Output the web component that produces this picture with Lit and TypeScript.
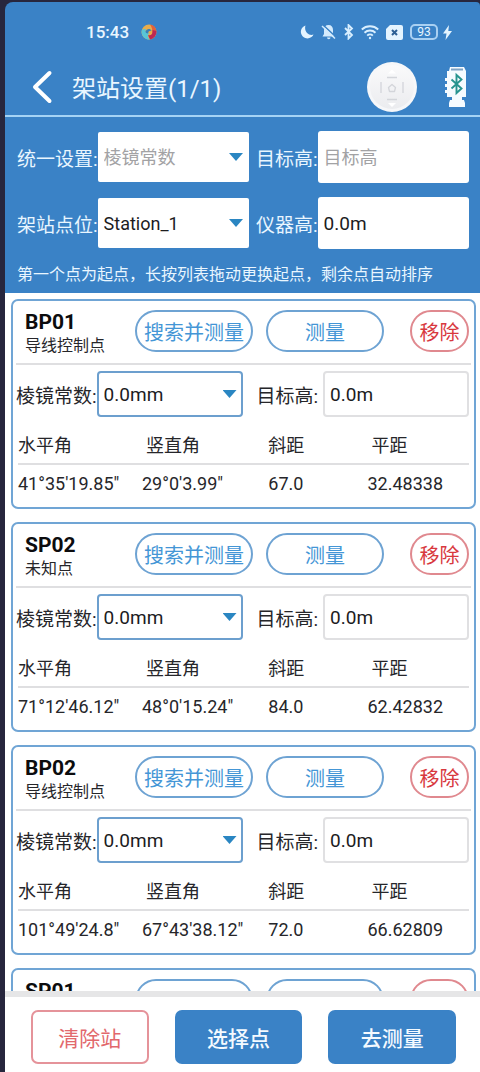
import { LitElement, html, css, svg } from "lit";
import { customElement, property } from "lit/decorators.js";

interface Point {
  name: string;
  kind: string;
  values: string[];
}

const COLUMNS = ["水平角", "竖直角", "斜距", "平距"];

const POINTS: Point[] = [
  { name: "BP01", kind: "导线控制点", values: ["41°35'19.85\"", "29°0'3.99\"", "67.0", "32.48338"] },
  { name: "SP02", kind: "未知点", values: ["71°12'46.12\"", "48°0'15.24\"", "84.0", "62.42832"] },
  { name: "BP02", kind: "导线控制点", values: ["101°49'24.8\"", "67°43'38.12\"", "72.0", "66.62809"] },
  { name: "SP01", kind: "未知点", values: ["", "", "", ""] },
];

const controls = css`
  * {
    box-sizing: border-box;
  }
  button,
  input,
  select {
    font: inherit;
    margin: 0;
    min-width: 0;
  }
  button {
    padding: 0;
    cursor: pointer;
  }
  .picker {
    display: grid;
    align-items: center;
    min-width: 0;
  }
  .picker select,
  .picker .arrow {
    grid-area: 1 / 1;
  }
  .picker select {
    appearance: none;
    width: 100%;
    padding: 0 24px 0 6px;
    background: #fff;
    color: #1c1c1e;
    border-radius: 2px;
  }
  .arrow {
    justify-self: end;
    width: 14px;
    height: 8px;
    margin-right: 6px;
    background: #2a86c2;
    clip-path: polygon(0 0, 100% 0, 50% 100%);
    pointer-events: none;
  }
`;

@customElement("point-card")
export class PointCard extends LitElement {
  @property({ attribute: false }) point!: Point;

  static styles = [
    controls,
    css`
      :host {
        display: block;
        flex: none;
        border: 2px solid #70a5d5;
        border-radius: 7px;
        padding: 0 5px;
        background: #fff;
        color: #26262a;
      }
      .head {
        display: flex;
        align-items: flex-start;
        padding: 9px 2px 5px;
        margin: 0 -2px;
        border-bottom: 2px solid #dfdfe1;
      }
      .title {
        flex: 1;
        padding-left: 7px;
        line-height: 24px;
      }
      .name {
        margin: 0;
        font-size: 21px;
        font-weight: 700;
        color: #0c0c0e;
      }
      .kind {
        margin: 0;
        font-size: 16px;
      }
      .pill {
        height: 42px;
        width: 118px;
        margin-left: 13px;
        border: 2px solid #6ea3d3;
        border-radius: 21px;
        background: #fff;
        color: #4496d6;
        font-size: 20px;
      }
      .remove {
        width: 59px;
        margin-left: 26px;
        border-color: #e0898f;
        color: #d8383e;
      }
      .fields {
        display: grid;
        grid-template-columns: auto 1fr auto 1fr;
        align-items: center;
        margin-left: -2px;
        padding-top: 6px;
        font-size: 19px;
      }
      .fields select,
      .fields input {
        height: 46px;
      }
      .fields select {
        padding-left: 5px;
        border: 2px solid #6c9fce;
        border-radius: 4px;
      }
      .second {
        padding: 0 5px 0 14px;
      }
      .fields input {
        width: 100%;
        padding: 0 5px;
        border: 2px solid #e0e0e2;
        border-radius: 4px;
        background: #fff;
        color: #1c1c1e;
      }
      table {
        width: 100%;
        table-layout: fixed;
        border-collapse: separate;
        border-spacing: 0;
        font-size: 18px;
        line-height: 22px;
      }
      th {
        padding: 18px 0 6px;
        font-weight: 400;
        text-align: left;
        border-bottom: 2px solid #dfdfe1;
      }
      td {
        padding: 8px 0 12px;
        height: 42px;
        white-space: nowrap;
      }
      .c0 {
        width: 124px;
      }
      .c1 {
        width: 28%;
      }
      .c2 {
        width: 22%;
      }
      th.c1,
      th.c3 {
        padding-left: 4px;
      }
    `,
  ];

  render() {
    const p = this.point;
    return html`
      <div class="head">
        <div class="title">
          <h2 class="name">${p.name}</h2>
          <p class="kind">${p.kind}</p>
        </div>
        <button class="pill">搜索并测量</button>
        <button class="pill">测量</button>
        <button class="pill remove">移除</button>
      </div>
      <div class="fields">
        <label for="prism">棱镜常数:</label>
        <div class="picker">
          <select id="prism"><option>0.0mm</option></select>
          <span class="arrow"></span>
        </div>
        <label class="second" for="target">目标高:</label>
        <input id="target" type="text" .value=${"0.0m"} />
      </div>
      <table>
        <thead>
          <tr>${COLUMNS.map((c, i) => html`<th class="c${i}" scope="col">${c}</th>`)}</tr>
        </thead>
        <tbody>
          <tr>${p.values.map((v) => html`<td>${v}</td>`)}</tr>
        </tbody>
      </table>
    `;
  }
}

const bluetooth = svg`<path d="M2 4 L9 11 L5.500 14.500 V1 L9 4.500 L2 11" />`;

@customElement("app-root")
export class AppRoot extends LitElement {
  static styles = [
    controls,
    css`
      :host {
        display: flex;
        flex-direction: column;
        height: 100vh;
        box-sizing: border-box;
        padding: 2px 0 0 5px;
        background: #27263d;
        font-family: Roboto, "Noto Sans CJK SC", sans-serif;
      }
      header {
        flex: none;
        background: #3a82c6;
        color: #e9f6ff;
        border-radius: 8px 4px 0 0;
      }
      .status {
        display: flex;
        align-items: center;
        height: 60px;
        padding: 0 28px 0 81px;
        font-size: 17px;
        font-weight: 500;
      }
      .status svg {
        display: block;
      }
      .swirl {
        margin-left: 12px;
      }
      .tray {
        display: flex;
        align-items: center;
        margin-left: auto;
        gap: 7px;
      }
      .battery {
        width: 28px;
        height: 16px;
        border: 2px solid #a9d0f2;
        border-radius: 5px;
        font-size: 12px;
        line-height: 12px;
        font-weight: 400;
        text-align: center;
      }
      .power {
        display: flex;
        align-items: center;
        gap: 5px;
      }
      .nav {
        display: flex;
        align-items: center;
        height: 55px;
        padding: 0 13px 4px 27px;
        border-bottom: 2px solid #a5d3f5;
      }
      .nav h1 {
        flex: 1;
        margin: 0 0 0 19px;
        font-size: 24px;
        font-weight: 400;
      }
      .icon {
        display: block;
        border: 0;
        background: none;
      }
      .icon svg {
        display: block;
      }
      .device {
        margin-left: 28px;
      }
      .setup {
        display: grid;
        grid-template-columns: auto 1fr auto 1fr;
        align-items: center;
        row-gap: 14px;
        padding: 14px 11px 0 12px;
        font-size: 19px;
      }
      .setup select {
        height: 50px;
        border: 0;
        font-size: 18px;
      }
      .setup .empty {
        color: #a2a2a4;
      }
      .second {
        padding-left: 7px;
      }
      .setup input {
        width: 100%;
        height: 52px;
        padding: 0 6px;
        border: 0;
        border-radius: 3px;
        background: #fff;
        color: #1c1c1e;
      }
      .setup input::placeholder {
        color: #a2a2a4;
        font-size: 18px;
        opacity: 1;
      }
      .hint {
        margin: 0;
        padding: 16px 12px 8px;
        font-size: 16px;
        line-height: 20px;
      }
      main {
        flex: 1;
        min-height: 0;
        overflow-y: auto;
        scrollbar-width: none;
        display: flex;
        flex-direction: column;
        gap: 13px;
        padding: 6px 4px 0 6px;
        background: #fff;
      }
      footer {
        flex: none;
        display: grid;
        grid-template-columns: 118fr 128fr 128fr;
        gap: 26px;
        padding: 13px 24px 8px 26px;
        border-top: 6px solid #e6e6e7;
        background: #fff;
      }
      .action {
        height: 54px;
        border: 0;
        border-radius: 7px;
        background: #3a82c6;
        color: #f4faff;
        font-size: 21px;
        font-weight: 500;
      }
      .clear {
        border: 2px solid #e5939a;
        background: #fff;
        color: #e2686c;
        font-weight: 400;
      }
    `,
  ];

  render() {
    return html`
      <header>
        <div class="status">
          <span>15:43</span>
          <svg class="swirl" width="16" height="16" viewBox="0 0 16 16" aria-hidden="true">
            <circle cx="8" cy="8" r="7.500" fill="#e8ad4c" />
            <path d="M1 5.500A7.500 7.500 0 0 0 9 15.400C6 13 7 10 9 9 5 10 4 7 5 5z" fill="#58c5d6" />
            <path d="M9 .6a7.500 7.500 0 0 1 6.400 6.400l-4 2C11.500 6 11 3 9 .6z" fill="#e2603c" />
            <path d="M15.400 7a7.500 7.500 0 0 1-6.400 8.400L7 11c3 1 5-1 4.500-5z" fill="#bd2854" />
            <path d="M4.500 7.500c1-3 5-3.500 6-.5C9 6.500 7.500 7 7 9.500 5.500 9.500 4.500 8.500 4.500 7.500z" fill="#397fb8" />
          </svg>
          <div class="tray">
            <svg width="14" height="14" viewBox="0 0 14 14" aria-hidden="true">
              <path d="M5.500 .5A6.600 6.600 0 1 0 13.500 9.500C9.500 11.500 3.500 7 5.500 .5z" fill="#e4f4ff" />
            </svg>
            <svg width="15" height="16" viewBox="0 0 15 16" aria-hidden="true">
              <path d="M7.500 1c3 0 4.500 2 4.500 5v4l1.500 2.500h-12L3 10V6c0-3 1.500-5 4.500-5zM6 13.500h3.500a1.700 1.700 0 0 1-3.500 0z" fill="#d4ebfd" />
              <path d="M1.500 .5 15 13" stroke="#3a82c6" stroke-width="1.500" />
              <path d="M1 2 14 14.500" stroke="#d4ebfd" stroke-width="1.500" />
            </svg>
            <svg width="11" height="16" viewBox="0 0 11 16" fill="none" stroke="#d9efff" stroke-width="1.800" aria-hidden="true">
              ${bluetooth}
            </svg>
            <svg width="18" height="16" viewBox="0 0 18 16" fill="none" stroke="#d9efff" stroke-width="1.900" aria-hidden="true">
              <path d="M.8 5.500a12 12 0 0 1 16.400 0M3.500 8.700a8 8 0 0 1 11 0M6.200 11.600a4 4 0 0 1 5.600 0" />
              <circle cx="9" cy="14" r="1.200" fill="#d9efff" stroke="none" />
            </svg>
            <svg width="17" height="15" viewBox="0 0 17 15" aria-hidden="true">
              <path d="M4 0h11a2 2 0 0 1 2 2v11a2 2 0 0 1-2 2H2a2 2 0 0 1-2-2V4z" fill="#e4f4ff" />
              <path d="M6 5l5 5M11 5l-5 5" stroke="#2c5f94" stroke-width="2" />
            </svg>
            <div class="power">
              <div class="battery">93</div>
              <svg width="9" height="15" viewBox="0 0 9 15" aria-hidden="true">
                <path d="M6 0 0 8.500h3.500L2.500 15 9 6H5.300z" fill="#e4f4ff" />
              </svg>
            </div>
          </div>
        </div>
        <div class="nav">
          <button class="icon" aria-label="返回">
            <svg width="21" height="34" viewBox="0 0 21 34" fill="none" stroke="#fff" stroke-width="4" stroke-linecap="round" stroke-linejoin="round">
              <path d="M17.500 3 3 17 17.500 31" />
            </svg>
          </button>
          <h1>架站设置(1/1)</h1>
          <button class="icon" aria-label="遥控">
            <svg width="50" height="50" viewBox="0 0 50 50">
              <defs>
                <linearGradient id="pad" x1="0" y1="0" x2="0" y2="1">
                  <stop offset="0" stop-color="#fafafb" />
                  <stop offset="1" stop-color="#ebecef" />
                </linearGradient>
              </defs>
              <circle cx="25" cy="25" r="25" fill="#f6f7f9" />
              <circle cx="25" cy="25" r="22" fill="url(#pad)" />
              <g fill="none" stroke="#d3d5da" stroke-width="1.300">
                <path d="M20 15.500h10M20 37.500h10M14 20v11M36 20v11" />
                <path d="M25 22.500 28.500 25.500 27.500 29.500H22.500L21.500 25.500z" stroke-linejoin="round" />
              </g>
              <path d="M21 11.500l4-4 4 4zM21 41l4 4 4-4z" fill="#fff" />
            </svg>
          </button>
          <button class="icon device" aria-label="蓝牙设备">
            <svg width="22" height="42" viewBox="0 0 22 42">
              <path d="M5 1h14l2 4v26H2V5h2z" fill="#f6fbff" />
              <path d="M6 3.500h12" stroke="#7fa3c4" stroke-width="2" />
              <path d="M0 12h3v3H0zM0 18h3v3H0zM0 24h3v3H0z" fill="#f6fbff" />
              <path d="M7 31h10v3H7zM5 34h14l1 3v4H4v-4z" fill="#f6fbff" />
              <path d="M6.500 13.500 16.500 22.500l-5 4.500V9l5 4.500-10 9" fill="none" stroke="#27948f" stroke-width="1.900" />
            </svg>
          </button>
        </div>
        <div class="setup">
          <label for="all-prism">统一设置:</label>
          <div class="picker">
            <select id="all-prism" class="empty"><option>棱镜常数</option></select>
            <span class="arrow"></span>
          </div>
          <label class="second" for="all-target">目标高:</label>
          <input id="all-target" type="text" placeholder="目标高" />
          <label for="station">架站点位:</label>
          <div class="picker">
            <select id="station"><option>Station_1</option></select>
            <span class="arrow"></span>
          </div>
          <label class="second" for="instrument">仪器高:</label>
          <input id="instrument" type="text" .value=${"0.0m"} />
        </div>
        <p class="hint">第一个点为起点，长按列表拖动更换起点，剩余点自动排序</p>
      </header>
      <main>${POINTS.map((p) => html`<point-card .point=${p}></point-card>`)}</main>
      <footer>
        <button class="action clear">清除站</button>
        <button class="action">选择点</button>
        <button class="action">去测量</button>
      </footer>
    `;
  }
}
